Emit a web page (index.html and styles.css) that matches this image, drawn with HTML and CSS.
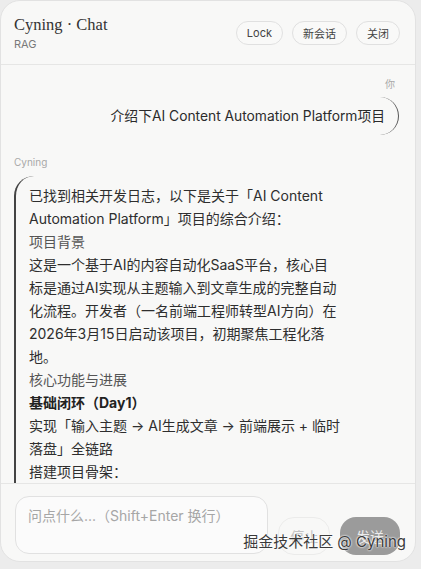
FILE: index.html
```html
<!DOCTYPE html>
<html lang="zh-CN">
<head>
    <meta charset="UTF-8">
    <meta name="viewport" content="width=device-width, initial-scale=1.0">
    <title>Cyning · Chat</title>
    <link rel="stylesheet" href="styles.css">
</head>
<body>
    <div class="panel">
        <div class="header">
            <div class="brand">
                <div class="brand-title">Cyning · Chat</div>
                <div class="brand-sub">RAG</div>
            </div>
            <div class="actions">
                <button class="pill">Lock</button>
                <button class="pill">新会话</button>
                <button class="pill">关闭</button>
            </div>
        </div>

        <div class="messages">
            <div class="msg msg-user">
                <div class="who">你</div>
                <div class="bubble bubble-user">介绍下AI Content Automation Platform项目</div>
            </div>
            <div class="msg msg-bot">
                <div class="who">Cyning</div>
                <div class="bubble bubble-bot">
                    <p>已找到相关开发日志，以下是关于「AI Content Automation Platform」项目的综合介绍：</p>
                    <p class="sub">项目背景</p>
                    <p>这是一个基于AI的内容自动化SaaS平台，核心目标是通过AI实现从主题输入到文章生成的完整自动化流程。开发者（一名前端工程师转型AI方向）在2026年3月15日启动该项目，初期聚焦工程化落地。</p>
                    <p class="sub">核心功能与进展</p>
                    <p class="strong">基础闭环（Day1）</p>
                    <p>实现「输入主题 → AI生成文章 → 前端展示 + 临时落盘」全链路</p>
                    <p>搭建项目骨架：</p>
                    <p>前端 Next.js + Tailwind，后端 Node.js 接口</p>
                    <p>接入大模型 API，完成首篇文章生成</p>
                </div>
            </div>
        </div>

        <div class="composer">
            <textarea class="input" placeholder="问点什么...（Shift+Enter 换行）"></textarea>
            <button class="btn btn-stop">停止</button>
            <button class="btn btn-send">发送</button>
        </div>

        <div class="watermark">掘金技术社区 @ Cyning</div>
    </div>
</body>
</html>
```

FILE: styles.css
```css
body {
    margin: 0;
    background: #ececec;
    font-family: "Inter", "Noto Sans CJK SC", sans-serif;
    color: #2b2b2b;
}

.panel {
    position: relative;
    width: 416px;
    height: 562px;
    box-sizing: border-box;
    display: flex;
    flex-direction: column;
    background: #f8f8f7;
    border: 1px solid #e2e2e2;
    border-radius: 20px;
    overflow: hidden;
}

/* header */
.header {
    height: 64px;
    flex-shrink: 0;
    box-sizing: border-box;
    display: flex;
    align-items: center;
    justify-content: space-between;
    padding: 0 15px 0 13px;
    border-bottom: 1px solid #e6e6e5;
}
.brand-title {
    font-family: "Liberation Serif", "DejaVu Serif", serif;
    font-size: 16.5px;
    color: #333;
    line-height: 20px;
}
.brand-sub {
    font-size: 11px;
    color: #7a7a7a;
    line-height: 14px;
    margin-top: 2px;
}
.actions {
    display: flex;
    gap: 9px;
}
.pill {
    height: 24px;
    padding: 0 10px;
    border: 1px solid #e0e0e0;
    border-radius: 12px;
    background: #f9f9f8;
    font-family: "Inter", "Noto Sans CJK SC", sans-serif;
    font-size: 11px;
    color: #444;
}

/* messages */
.messages {
    flex: 1;
    overflow: hidden;
    padding: 12px 16px 0 13px;
}
.msg {
    display: flex;
    flex-direction: column;
}
.msg-user {
    align-items: flex-end;
    margin-bottom: 20px;
}
.who {
    font-size: 10px;
    color: #a8a8a8;
    line-height: 14px;
}
.msg-user .who {
    margin-right: 4px;
}
.bubble-user {
    margin-top: 6px;
    padding: 9px 13px 9px 12px;
    border-right: 1.5px solid #555;
    border-radius: 20px;
    font-size: 13.8px;
    line-height: 20px;
    color: #2b2b2b;
}
.bubble-bot {
    margin-top: 7px;
    width: 313px;
    padding: 8px 0 0 13px;
    border-left: 2px solid #444;
    border-top-left-radius: 20px;
    font-size: 14px;
    line-height: 23px;
    color: #2e2e2e;
}
.bubble-bot p {
    margin: 0;
}
.bubble-bot .sub {
    color: #555;
}
.bubble-bot .strong {
    font-weight: 700;
    color: #222;
}

/* composer */
.composer {
    height: 78px;
    flex-shrink: 0;
    box-sizing: border-box;
    display: flex;
    align-items: flex-end;
    gap: 10px;
    padding: 0 15px 6px 14px;
    border-top: 1px solid #e6e6e5;
}
.input {
    width: 254px;
    height: 58px;
    box-sizing: border-box;
    padding: 9px 12px;
    border: 1px solid #e1e1e1;
    border-radius: 14px;
    background: #fbfbfb;
    resize: none;
    font-family: "Inter", "Noto Sans CJK SC", sans-serif;
    font-size: 14px;
    line-height: 20px;
    margin-bottom: 1px;
}
.input::placeholder {
    color: #a6a6a6;
}
.btn {
    height: 38px;
    border-radius: 16px;
    font-family: "Inter", "Noto Sans CJK SC", sans-serif;
    font-size: 14px;
}
.btn-stop {
    width: 52px;
    background: #f8f8f7;
    border: 1px solid #ebebea;
    color: #c2c2c2;
}
.btn-send {
    width: 60px;
    background: #9b9b9b;
    border: none;
    color: #ececec;
}

.watermark {
    position: absolute;
    right: 9px;
    bottom: 10px;
    font-size: 15px;
    color: #3a3a3a;
    text-shadow: 0 0 2px #fff, 0 0 2px #fff;
}
```
